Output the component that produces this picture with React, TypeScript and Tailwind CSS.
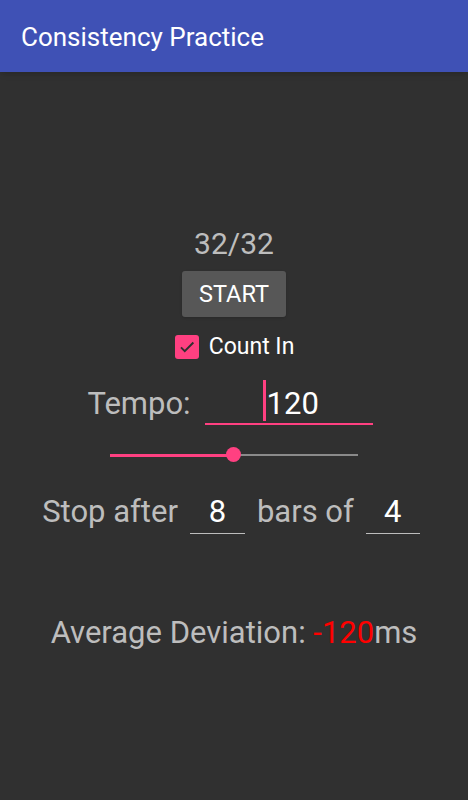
import React from 'react';

const font = { fontFamily: 'Roboto, "Liberation Sans", sans-serif' };

const App: React.FC = () => {
    return (
        <div className="w-[468px] h-[800px] flex flex-col bg-[#303030]" style={font}>
            {/* App bar */}
            <div className="h-[72px] shrink-0 bg-[#3F51B5] flex items-center pl-[21px] shadow-md">
                <span className="text-[26px] text-white leading-none mt-[1px]">Consistency Practice</span>
            </div>

            <div className="flex flex-col items-center">
                {/* Counter */}
                <div className="mt-[155px] text-[30px] leading-[34px] text-[#bdbdbd]">32/32</div>

                {/* Start button */}
                <button className="mt-[10px] w-[104px] h-[46px] rounded-[3px] bg-[#575757] text-[23.5px] text-white shadow-sm pt-[2px]">
                    START
                </button>

                {/* Count in checkbox */}
                <div className="mt-[16px] flex items-center gap-[10px] ml-[1px]">
                    <div className="w-[24px] h-[24px] rounded-[3px] bg-[#FF4081] flex items-center justify-center">
                        <svg width="18" height="18" viewBox="0 0 24 24" fill="none">
                            <path d="M4 12.5l5 5L20.5 6" stroke="#303030" strokeWidth="2.6" />
                        </svg>
                    </div>
                    <span className="text-[23px] leading-[28px] text-white">Count In</span>
                </div>

                {/* Tempo */}
                <div className="mt-[16px] flex items-end gap-[14px] -ml-[8px]">
                    <span className="text-[31px] leading-[36px] text-[#bdbdbd] mb-[3px]">Tempo:</span>
                    <div className="relative w-[168px] h-[48px] border-b-2 border-[#FF4081] flex items-end">
                        <span className="absolute left-[58px] top-[3px] w-[3px] h-[41px] bg-[#FF4081]" />
                        <span className="ml-[62px] mb-[1px] text-[31px] leading-[36px] text-white">120</span>
                    </div>
                </div>

                {/* Slider */}
                <div className="mt-[22px] relative w-[248px] h-[16px] flex items-center">
                    <div className="h-[3px] w-[123px] bg-[#FF4081]" />
                    <div className="h-[2px] flex-1 bg-[#8a8a8a]" />
                    <div className="absolute left-[116px] top-[0px] w-[15px] h-[15px] rounded-full bg-[#FF4081]" />
                </div>

                {/* Stop after */}
                <div className="mt-[31px] flex items-end gap-[12px] -ml-[6px]">
                    <span className="text-[31px] leading-[36px] text-[#bdbdbd] mb-[4px]">Stop after</span>
                    <div className="w-[55px] border-b border-[#bdbdbd] text-center text-[31px] leading-[36px] text-white pb-[3px]">8</div>
                    <span className="text-[31px] leading-[36px] text-[#bdbdbd] mb-[4px]">bars of</span>
                    <div className="w-[54px] border-b border-[#bdbdbd] text-center text-[31px] leading-[36px] text-white pb-[3px]">4</div>
                </div>

                {/* Average deviation */}
                <div className="mt-[81px] text-[31px] leading-[36px] text-[#bdbdbd]">
                    Average Deviation: <span className="text-[#ff0000]">-120</span>ms
                </div>
            </div>
        </div>
    );
};

export default App;
